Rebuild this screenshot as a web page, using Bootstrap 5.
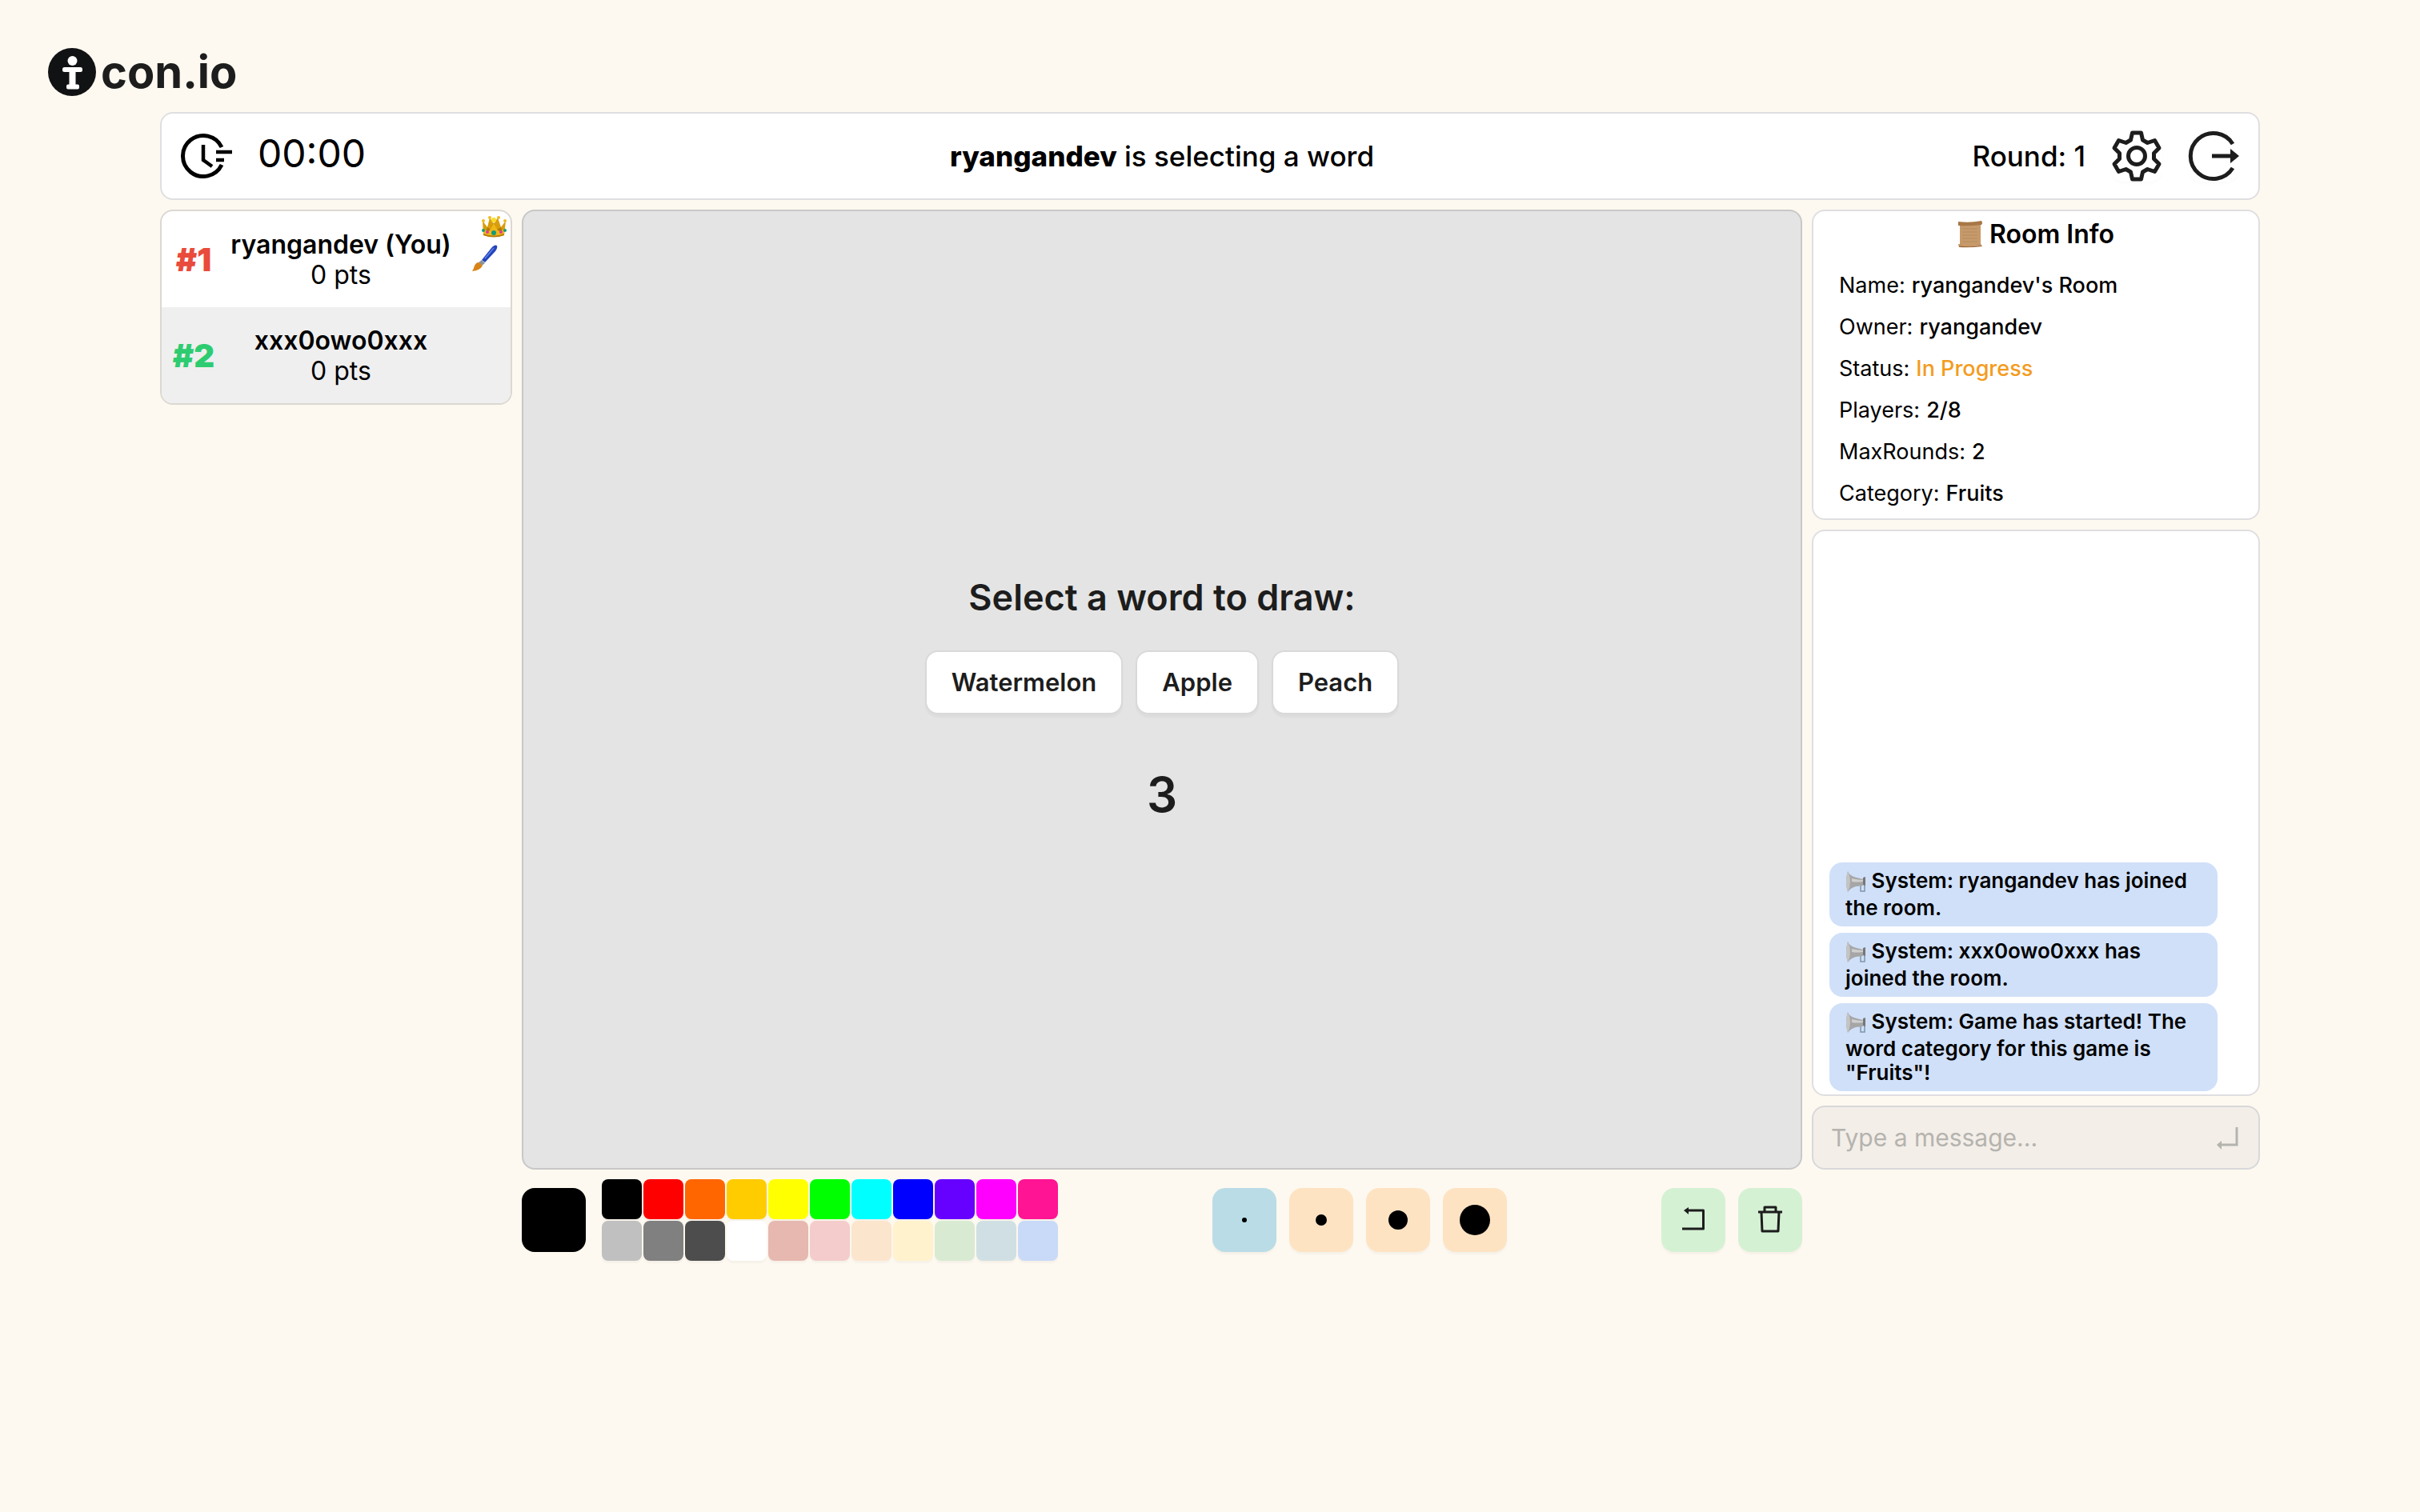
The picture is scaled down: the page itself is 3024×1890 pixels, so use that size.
<!DOCTYPE html>
<html lang="en">
<head>
<meta charset="utf-8">
<meta name="viewport" content="width=device-width, initial-scale=1">
<title>icon.io</title>
<link rel="stylesheet" href="https://cdn.jsdelivr.net/npm/bootstrap@5.3.0/dist/css/bootstrap.min.css">
<style>
  body { background: #fef9f0; color: #000; font-family: Inter, "Noto Sans", sans-serif; font-size: 32px; line-height: 40px; }
  svg { display: block; flex: none; }
  .site-logo { padding: 60px 60px 0; gap: 6px; color: #1d1d1d; font-size: 56px; line-height: 60px; font-weight: 700; text-decoration: none; }
  .game { padding: 20px 200px 40px; gap: 12px; }
  .panel { background: #fff; border: 2px solid #dfdfe1; border-radius: 16px; overflow: hidden; }
  .col-left { flex: 0 0 440px; }
  .col-mid { flex: 1 1 0; min-width: 0; }
  .col-right { flex: 0 0 560px; min-width: 0; }
  .columns { gap: 12px; }
  .topbar { height: 110px; gap: 12px; font-size: 35px; font-weight: 500; }
  .topbar strong { font-weight: 800; }
  .timer { padding-left: 24px; gap: 32px; font-size: 48px; font-weight: 400; line-height: 60px; }
  .timer span { padding-bottom: 6px; }
  .controls { padding-right: 24px; gap: 32px; }
  .icon-btn { width: 64px; height: 64px; padding: 0; border: 0; background: none; border-radius: 16px; color: #1d1d1d; box-shadow: 0 3px 2px rgba(0,0,0,.015); }
  .player { position: relative; height: 120px; padding: 2px 68px 0 0; line-height: 38px; }
  .player:nth-child(even) { background: #efefef; }
  .players { border-color: #dbd8d2; }
  .rank { flex: 0 0 80px; font-size: 40px; font-weight: 900; }
  .rank-1 { color: #e94b3c; }
  .rank-2 { color: #2ecc71; }
  .player-name { font-size: 32px; font-weight: 600; }
  .player-badges { position: absolute; top: 4px; right: 4px; width: 44px; height: 72px; }
  .board { aspect-ratio: 4 / 3; padding-top: 22px; background: #e4e4e4; border: 2px solid #c8c8c8; border-radius: 16px; color: #1d1d1d; }
  .board h2 { font-size: 45px; line-height: 60px; font-weight: 600; margin: 0 0 36px; }
  .words { gap: 16px; margin-bottom: 64px; }
  .word-btn { height: 80px; padding: 0 31px; background: #fff; border: 2px solid #d9d9d9; border-radius: 16px; color: #1d1d1d; font-size: 31px; font-weight: 600; box-shadow: 0 4px 2px rgba(0,0,0,.03); }
  .countdown { font-size: 60px; line-height: 72px; font-weight: 600; }
  .side { gap: 12px; }
  .info { padding: 9px 32px 5px; font-size: 27px; }
  .info h1 { margin: 0 0 18px; gap: 8px; font-size: 32px; line-height: 40px; font-weight: 600; }
  .info dl { margin: 0; }
  .info dl div { height: 52px; gap: 8px; }
  .info dt { font-weight: 400; }
  .info dd { margin: 0; font-weight: 500; }
  .status { color: #f39c1f; }
  .chat { padding: 0 51px 4px 20px; gap: 8px; font-size: 26px; line-height: 30px; font-weight: 600; }
  .bubble { margin: 0; padding: 8px 20px; background: #d0e0f9; border-radius: 16px; }
  .bubble svg { display: inline-block; vertical-align: -10px; }
  .composer { height: 80px; padding: 0 24px 0 22px; background: #f3eee8; border-color: #d8d8da; color: #b5b3ae; }
  .composer input { background: none; border: 0; padding: 0; outline: 0; width: 0; min-width: 0; font-size: 30px; color: inherit; }
  .composer input::placeholder { color: #b5b3ae; opacity: 1; }
  .composer .send { width: 32px; height: 32px; padding: 0; border: 0; background: none; color: inherit; }
  .palette { gap: 20px; }
  .current { width: 80px; height: 80px; border-radius: 16px; background: #000; }
  .swatches { display: grid; grid-template-columns: repeat(11, 50px); gap: 2px; }
  .swatch { height: 50px; padding: 0; border: 0; border-radius: 8px; box-shadow: 0 3px 2px rgba(0,0,0,.03); }
  .tool { width: 80px; height: 80px; padding: 0; border: 0; border-radius: 16px; background: #fee3c3; color: #1d1d1d; box-shadow: 0 3px 2px rgba(0,0,0,.03); }
  .tool.on { background: #badce7; }
  .tool.act { background: #d5f1d4; }
  .dot { display: block; border-radius: 50%; background: #000; }
</style>
</head>
<body>
<div class="d-flex">
  <a href="#" class="site-logo d-flex align-items-center" aria-label="icon.io">
    <svg width="60" height="60" viewBox="0 0 60 60"><circle cx="30" cy="30" r="30" fill="#111214"/><g fill="#fff"><circle cx="30.500" cy="16" r="6"/><rect x="18" y="24" width="25" height="6" rx="2.500"/><path d="M26.500 28h8v17.500h2.500a2 2 0 0 1 2 2v2a2 2 0 0 1-2 2H25a2 2 0 0 1-2-2v-2a2 2 0 0 1 2-2h1.500z"/></g></svg>
    <span>con.io</span>
  </a>
</div>
<main class="game d-flex flex-column">
  <header class="panel topbar d-flex align-items-center">
    <div class="col-left timer d-flex align-items-center">
      <svg width="64" height="64" viewBox="0 0 64 64" fill="none" stroke="#000"><path d="M51 21A25.500 25.500 0 1 0 51 43" stroke-width="5"/><path d="M28 18v19l11 8" stroke-width="4.500"/><path d="M44 27h20M44 37h10" stroke-width="4.500"/></svg>
      <span>00:00</span>
    </div>
    <div class="col-mid text-center"><strong>ryangandev</strong> is selecting a word</div>
    <div class="col-right controls d-flex align-items-center justify-content-end">
      <span>Round: 1</span>
      <button class="icon-btn" type="button" aria-label="Settings"><svg width="64" height="64" viewBox="0 0 64 64" fill="none" stroke="currentColor" stroke-width="5" stroke-linejoin="round"><path d="M26.500 3h11l2 9 6 3.500 9-3 5.500 9.500-6.500 6.500v7l6.500 6.500-5.500 9.500-9-3-6 3.500-2 9h-11l-2-9-6-3.500-9 3L4 42l6.500-6.500v-7L4 22l5.500-9.500 9 3 6-3.500z"/><circle cx="32" cy="32" r="10.500"/></svg></button>
      <button class="icon-btn" type="button" aria-label="Leave room"><svg width="64" height="64" viewBox="0 0 64 64" fill="none" stroke="currentColor" stroke-width="5"><path d="M56 17A28.500 28.500 0 1 0 56 47"/><path d="M30 32h25"/><path d="M53 23l11 9-11 9z" fill="currentColor" stroke="none"/></svg></button>
    </div>
  </header>
  <div class="columns d-flex align-items-start">
    <section class="col-left panel players" aria-label="Players">
      <div class="player d-flex align-items-center text-center">
        <div class="rank rank-1">#1</div>
        <div class="flex-grow-1"><div class="player-name">ryangandev (You)</div><div>0 pts</div></div>
        <svg class="player-badges" viewBox="0 0 44 72">
          <g transform="translate(12 2)"><path d="M2 24L1 6l6 8 3-12 5 8 5-8 4 12 6-8-2 18q-13 4-26 0z" fill="#d99d0c"/><path d="M5 20l2-6 4 3 4-9 4 9 5-3 2 6z" fill="#b07a08"/><path d="M2 16q5 4 8 2l5-9 5 9q4 2 8-2l0 8q-13 4-26 0z" fill="#eeb818"/><path d="M2 22q13 5 26 0v2q-13 5-26 0z" fill="#b87c08"/><g fill="#eebc20"><circle cx="2" cy="6" r="2"/><circle cx="10" cy="2" r="2"/><circle cx="15" cy="5" r="3" fill="#f9dc2a"/><circle cx="21" cy="2" r="2"/><circle cx="29" cy="6" r="2"/></g><circle cx="15" cy="21" r="3" fill="#149b7b"/><circle cx="7" cy="20" r="2" fill="#e0389a"/><circle cx="24" cy="20" r="2" fill="#e0389a"/><circle cx="2" cy="18" r="2" fill="#149b7b"/><circle cx="29" cy="18" r="2" fill="#149b7b"/></g>
          <g transform="translate(0 38)"><path d="M12 19L24 4q4-5 7-3 1 3-2 7L16 22z" fill="#2444bd"/><path d="M16 17L27 4" stroke="#5f82e6" stroke-width="1.500"/><path d="M12 19l4 4-4 3-4-4z" fill="#8c9299"/><path d="M8 22l5 4q-3 6-13 7 2-3 3-7 2-4 5-4z" fill="#d98316"/></g>
        </svg>
      </div>
      <div class="player d-flex align-items-center text-center">
        <div class="rank rank-2">#2</div>
        <div class="flex-grow-1"><div class="player-name">xxx0owo0xxx</div><div>0 pts</div></div>
      </div>
    </section>
    <section class="col-mid board d-flex flex-column align-items-center justify-content-center">
      <h2>Select a word to draw:</h2>
      <div class="words d-flex">
        <button class="word-btn" type="button">Watermelon</button>
        <button class="word-btn" type="button">Apple</button>
        <button class="word-btn" type="button">Peach</button>
      </div>
      <div class="countdown">3</div>
    </section>
    <aside class="col-right side d-flex flex-column align-self-stretch">
      <section class="panel info">
        <h1 class="d-flex justify-content-center align-items-center"><svg width="32" height="34" viewBox="0 0 32 34"><path d="M3 4h26v27H3z" fill="#c69a6b"/><path d="M1 1q14 2 29-1 2 3 0 5-15 2-29 1z" fill="#a87746"/><path d="M1 29q14 2 28 0l2 3q-15 2-29 1z" fill="#a87746"/><path d="M1 30q14 2 28 0" stroke="#e0b488" fill="none"/><path d="M6 10h19M6 14h19M6 18h19M6 22h19M6 26h19" stroke="#b68b5e"/></svg>Room Info</h1>
        <dl>
          <div class="d-flex align-items-center"><dt>Name:</dt><dd>ryangandev's Room</dd></div>
          <div class="d-flex align-items-center"><dt>Owner:</dt><dd>ryangandev</dd></div>
          <div class="d-flex align-items-center"><dt>Status:</dt><dd class="status">In Progress</dd></div>
          <div class="d-flex align-items-center"><dt>Players:</dt><dd>2/8</dd></div>
          <div class="d-flex align-items-center"><dt>MaxRounds:</dt><dd>2</dd></div>
          <div class="d-flex align-items-center"><dt>Category:</dt><dd>Fruits</dd></div>
        </dl>
      </section>
      <section class="panel chat flex-grow-1 d-flex flex-column justify-content-end" aria-label="Chat">
        <p class="bubble"><svg width="26" height="32" viewBox="0 0 26 32"><use href="#horn"/></svg> System: ryangandev has joined the room.</p>
        <p class="bubble"><svg width="26" height="32" viewBox="0 0 26 32"><use href="#horn"/></svg> System: xxx0owo0xxx has joined the room.</p>
        <p class="bubble"><svg width="26" height="32" viewBox="0 0 26 32"><use href="#horn"/></svg> System: Game has started! The word category for this game is "Fruits"!</p>
      </section>
      <form class="panel composer d-flex align-items-center">
        <input class="flex-grow-1" type="text" placeholder="Type a message..." aria-label="Type a message">
        <button class="send" type="submit" aria-label="Send"><svg width="32" height="32" viewBox="0 0 32 32" fill="none" stroke="currentColor" stroke-width="3"><path d="M29 3v22H8"/><path d="M10 20v11l-6-6z" fill="currentColor" stroke="none"/></svg></button>
      </form>
    </aside>
  </div>
  <div class="columns d-flex">
    <div class="col-left"></div>
    <div class="col-mid d-flex align-items-center justify-content-between">
      <div class="palette d-flex align-items-center">
        <div class="current"></div>
        <div class="swatches" id="swatches"></div>
      </div>
      <div class="d-flex gap-3">
        <button class="tool on d-flex align-items-center justify-content-center" type="button" aria-label="Brush size 1"><span class="dot" style="width:6px;height:6px"></span></button>
        <button class="tool d-flex align-items-center justify-content-center" type="button" aria-label="Brush size 2"><span class="dot" style="width:14px;height:14px"></span></button>
        <button class="tool d-flex align-items-center justify-content-center" type="button" aria-label="Brush size 3"><span class="dot" style="width:24px;height:24px"></span></button>
        <button class="tool d-flex align-items-center justify-content-center" type="button" aria-label="Brush size 4"><span class="dot" style="width:38px;height:38px"></span></button>
      </div>
      <div class="d-flex gap-3">
        <button class="tool act d-flex align-items-center justify-content-center" type="button" aria-label="Undo"><svg width="32" height="32" viewBox="0 0 32 32" fill="none" stroke="currentColor" stroke-width="3" stroke-linejoin="round"><path d="M8 4h20.500v23H2"/><path d="M10 0v9L4 4z" fill="currentColor" stroke="none"/></svg></button>
        <button class="tool act d-flex align-items-center justify-content-center" type="button" aria-label="Clear canvas"><svg width="32" height="36" viewBox="0 0 32 36" fill="none" stroke="currentColor" stroke-width="3" stroke-linejoin="round"><path d="M1 8h30M5 8l1 24h20l1-24M9 7V2h14v5"/></svg></button>
      </div>
    </div>
    <div class="col-right"></div>
  </div>
</main>
<svg width="0" height="0" class="position-absolute" aria-hidden="true">
  <symbol id="horn" viewBox="0 0 26 32"><path d="M19 14v12h5V12" fill="none" stroke="#7d94a8" stroke-width="1.500"/><path d="M3 1q2 6 11 8l8 2v8l-9 1Q6 22 3 27q-4-13 0-26z" fill="#a6a6a6"/><path d="M3 1q6 13 0 26-4-13 0-26z" fill="#c4c4c4"/><path d="M8 10q8 2 14 2v2q-8 1-14 0z" fill="#cfcfcf"/><path d="M22 9l3-1v11l-3-1z" fill="#777"/></symbol>
</svg>
<script src="https://cdn.jsdelivr.net/npm/bootstrap@5.3.0/dist/js/bootstrap.bundle.min.js"></script>
<script>
  const colors = ["#000000","#ff0000","#ff6600","#ffcc00","#ffff00","#00ff00","#00ffff","#0000ff","#6600ff","#ff00ff","#ff1493",
    "#c0c0c0","#808080","#4d4d4d","#ffffff","#e6b8af","#f4cccc","#fce5cd","#fff2cc","#d9ead3","#d0dfe3","#c9daf8"];
  document.getElementById("swatches").innerHTML = colors.map(c =>
    `<button type="button" class="swatch" aria-label="Colour ${c}" style="background:${c}"></button>`).join("");
</script>
</body>
</html>
